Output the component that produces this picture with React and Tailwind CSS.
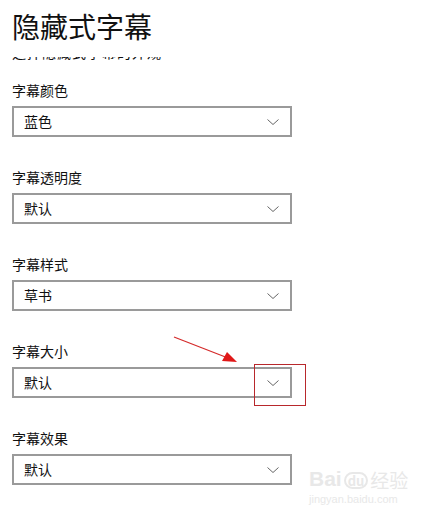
const fields = [
  { label: "字幕颜色", value: "蓝色" },
  { label: "字幕透明度", value: "默认" },
  { label: "字幕样式", value: "草书" },
  { label: "字幕大小", value: "默认" },
  { label: "字幕效果", value: "默认" },
];

const Select = ({ value }) => (
  <div className="flex items-center justify-between w-[280px] h-[31px] border-2 border-[#9a9a9a] bg-white pl-[10px] pr-[8px]">
    <span className="text-[14px] text-[#111]">{value}</span>
    <svg width="14" height="8" viewBox="0 0 14 8" className="mr-[2px]">
      <path d="M1.5 1.5 L7 6.5 L12.5 1.5" fill="none" stroke="#666" strokeWidth="1" />
    </svg>
  </div>
);

export default function App() {
  return (
    <div
      className="relative w-[425px] h-[519px] bg-white overflow-hidden text-[#111]"
      style={{ fontFamily: '"Microsoft YaHei", "Noto Sans CJK SC", sans-serif' }}
    >
      <div className="pl-[12px] pt-[7px]">
        <h1 className="text-[28px] leading-[38px] font-normal">隐藏式字幕</h1>

        {/* line scrolled under the header, only its foot shows */}
        <div className="h-[5px] mt-[12px] overflow-hidden">
          <div className="text-[14px] leading-[20px] -mt-[15px] tracking-[1px]">选择隐藏式字幕的外观</div>
        </div>

        <div className="flex flex-col gap-[30px] mt-[18px]">
          {fields.map((f, i) => (
            <div key={i} className="flex flex-col">
              <div className="text-[14px] leading-[20px] h-[20px]">{f.label}</div>
              <div className="mt-[6px]">
                <Select value={f.value} />
              </div>
            </div>
          ))}
        </div>
      </div>

      {/* annotation: arrow + red box */}
      <svg className="absolute left-0 top-0 pointer-events-none" width="425" height="519">
        <line x1="174" y1="337" x2="228" y2="358" stroke="#d42a2a" strokeWidth="1.2" />
        <polygon points="237,362 222,361 227,352" fill="#e01818" />
        <rect x="254.5" y="364.5" width="51" height="41" fill="none" stroke="#b8282c" strokeWidth="1" />
      </svg>

      {/* watermark */}
      <div className="absolute left-[309px] top-[468px] text-[#e8e8e8] leading-none select-none">
        <div className="flex items-end gap-[2px]">
          <span className="text-[21px] font-bold" style={{ fontFamily: '"Liberation Sans", sans-serif' }}>Bai</span>
          <span className="text-[13px] font-bold border-2 border-[#e8e8e8] rounded-full px-[2px]">du</span>
          <span className="text-[19px]">经验</span>
        </div>
        <div className="text-[11px] mt-[5px]" style={{ fontFamily: '"Liberation Sans", sans-serif' }}>jingyan.baidu.com</div>
      </div>
    </div>
  );
}
